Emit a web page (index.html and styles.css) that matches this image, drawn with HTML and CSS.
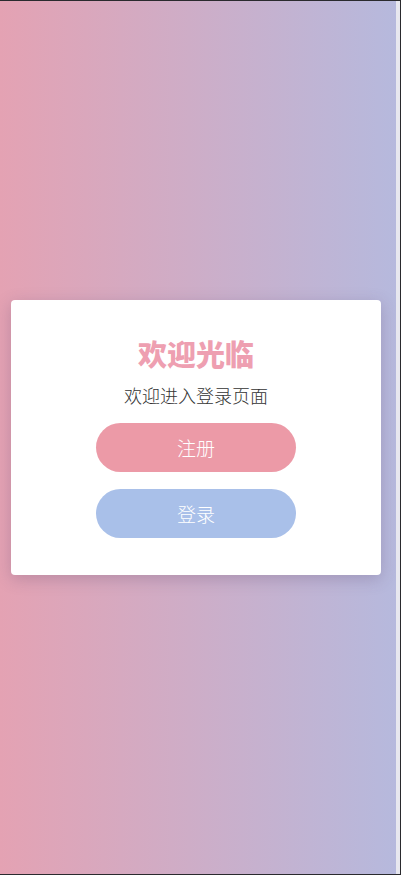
FILE: index.html
```html
<!DOCTYPE html>
<html lang="zh-CN">
  <head>
    <meta charset="UTF-8" />
    <meta name="viewport" content="width=device-width, initial-scale=1.0" />
    <title>欢迎光临</title>
    <link rel="stylesheet" href="styles.css">
  </head>
  <body class="body">
    <div class="page">
      <div class="bg">
        <div class="card">
          <h1 class="title">欢迎光临</h1>
          <p class="sub">欢迎进入登录页面</p>
          <button class="btn btnReg">注册</button>
          <button class="btn btnLogin">登录</button>
        </div>
      </div>
      <div class="edge"></div>
    </div>
  </body>
</html>
```

FILE: styles.css
```css
.body {
  margin: 0;
  font-family: "Noto Sans CJK SC", "Noto Sans", sans-serif;
}
.page {
  box-sizing: border-box;
  height: 100vh;
  display: flex;
  border-top: 1px solid #2a2a2e;
  border-bottom: 1px solid #2a2a2e;
}
.bg {
  flex: 1;
  display: flex;
  align-items: center;
  background: linear-gradient(to right, #e4a2b3, #b6b9dd);
}
.edge {
  width: 4px;
  background-color: #e7e7ef;
  border-right: 1px solid #2a2a2e;
}
.card {
  box-sizing: border-box;
  width: 370px;
  margin-left: 11px;
  padding: 32px 0 37px;
  background-color: #fff;
  border-radius: 4px;
  box-shadow: 0 4px 16px rgba(80, 60, 100, 0.25);
  display: flex;
  flex-direction: column;
  align-items: center;
}
.title {
  margin: 0;
  font-size: 29px;
  line-height: 42px;
  font-weight: 900;
  color: #ee9fb1;
}
.sub {
  margin: 8px 0 15px;
  font-size: 18px;
  line-height: 26px;
  font-weight: 300;
  color: #333;
}
.btn {
  width: 200px;
  height: 49px;
  border: none;
  border-radius: 25px;
  color: #fff;
  font-family: inherit;
  font-size: 19px;
  font-weight: 300;
}
.btnReg {
  background-color: #ec9aa7;
  margin-bottom: 17px;
}
.btnLogin {
  background-color: #a9c0e9;
}
```
